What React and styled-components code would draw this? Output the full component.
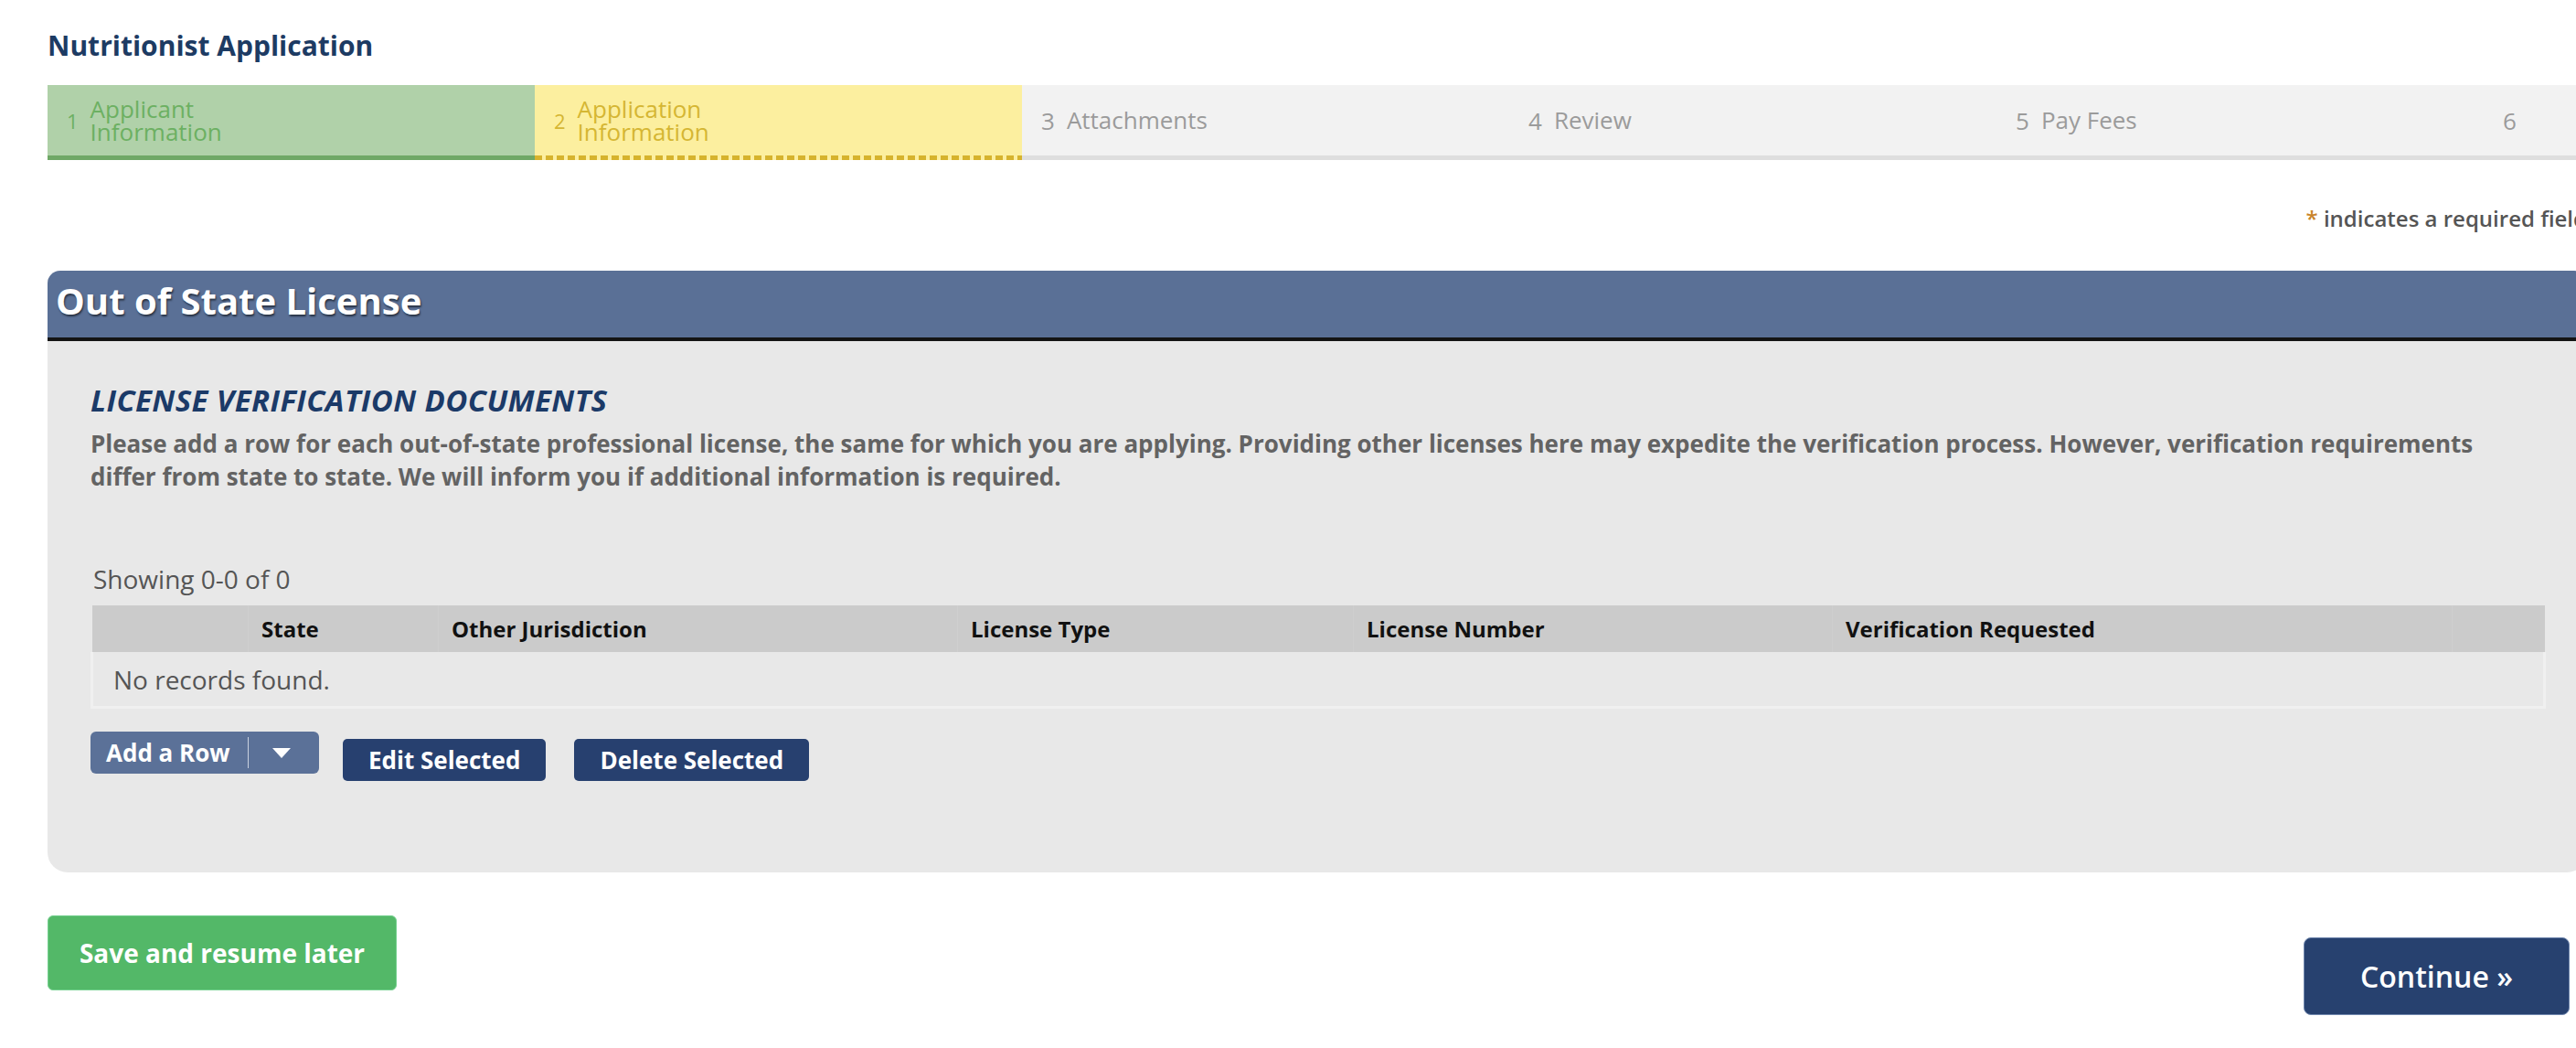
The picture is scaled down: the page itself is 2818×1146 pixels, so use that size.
import styled, { createGlobalStyle } from "styled-components";

const GlobalStyle = createGlobalStyle`
  html, body {
    margin: 0;
    padding: 0;
    background: #fff;
    overflow: hidden;
  }
  body {
    font-family: "Open Sans", Lato, sans-serif;
  }
`;

const Page = styled.div`
  width: 2778px;
  margin-left: 52px;
  padding-top: 32px;
`;

const Title = styled.h1`
  margin: 0;
  font-size: 30px;
  line-height: 36px;
  font-weight: 700;
  color: #1d3b63;
`;

const StepBar = styled.div`
  display: flex;
  margin-top: 25px;
  overflow: hidden;
`;

const stepTones = {
  done: { bg: "#b0d1a9", fg: "#6cb062", line: "#6fa866" },
  current: { bg: "#fcef9f", fg: "#d5b633", line: "#d6b32d" },
  todo: { bg: "#f2f2f2", fg: "#9b9b9b", line: "#dedede" },
};

const Step = styled.div`
  flex: 0 0 533px;
  height: 82px;
  box-sizing: border-box;
  display: flex;
  align-items: center;
  gap: 13px;
  padding: 0 21px 5px;
  font-size: 26px;
  color: ${(p) => stepTones[p.$tone].fg};
  background: ${(p) =>
    p.$tone === "current"
      ? `repeating-linear-gradient(90deg, ${stepTones.current.line} 0 8px, ${stepTones.current.bg} 8px 12px) left bottom / 100% 5px no-repeat, ${stepTones.current.bg}`
      : `linear-gradient(${stepTones[p.$tone].line}, ${stepTones[p.$tone].line}) left bottom / 100% 5px no-repeat, ${stepTones[p.$tone].bg}`};
`;

const StepNum = styled.span`
  font-size: ${(p) => (p.$small ? "22px" : "26px")};
`;

const StepLabel = styled.span`
  line-height: 25px;
`;

const Required = styled.div`
  margin-top: 49px;
  text-align: right;
  font-size: 24px;
  line-height: 30px;
  font-weight: 600;
  color: #555;
`;

const Star = styled.span`
  color: #c9842b;
`;

const Panel = styled.section`
  margin-top: 42px;
  background: #e8e8e8;
  border-radius: 14px 14px 22px 22px;
  overflow: hidden;
`;

const PanelHeader = styled.h2`
  margin: 0;
  height: 77px;
  box-sizing: border-box;
  padding: 10px 9px 0;
  background: #5a7096;
  border-bottom: 4px solid #141414;
  font-size: 40px;
  line-height: 46px;
  font-weight: 700;
  color: #fff;
  text-shadow: 1px 2px 2px rgba(0, 0, 0, 0.55);
`;

const PanelBody = styled.div`
  padding: 47px 48px 100px 47px;
`;

const SectionTitle = styled.h3`
  margin: 0;
  font-size: 33px;
  line-height: 36px;
  letter-spacing: 0.4px;
  font-weight: 700;
  font-style: italic;
  color: #1b3a68;
`;

const Description = styled.p`
  margin: 11px 0 0;
  font-size: 26px;
  line-height: 36px;
  font-weight: 700;
  color: #636363;
`;

const Showing = styled.div`
  margin-top: 79px;
  padding-left: 3px;
  font-size: 28px;
  line-height: 30px;
  color: #555;
`;

const Table = styled.table`
  margin-top: 14px;
  width: 100%;
  border-collapse: collapse;
  table-layout: fixed;
`;

const Th = styled.th`
  height: 51px;
  padding: 0 14px;
  background: #cbcbcb;
  border-left: 1px solid #cfcfcf;
  text-align: left;
  font-size: 24px;
  font-weight: 700;
  color: #111;
  &:first-child {
    border-left: none;
  }
`;

const EmptyCell = styled.td`
  height: 59px;
  padding: 0 0 0 22px;
  border: 3px solid #f0f0f0;
  border-top: none;
  font-size: 28px;
  color: #555;
`;

const Actions = styled.div`
  display: flex;
  align-items: flex-start;
  margin-top: 25px;
`;

const SplitButton = styled.button`
  display: flex;
  align-items: center;
  width: 250px;
  height: 46px;
  padding: 0 0 0 17px;
  border: none;
  border-radius: 6px;
  background: #5b7198;
  color: #fff;
  font-family: inherit;
  font-size: 26px;
  font-weight: 700;
`;

const SplitDivider = styled.span`
  width: 1px;
  height: 34px;
  margin-left: 19px;
  background: #c9d1df;
`;

const Caret = styled.span`
  display: flex;
  flex: 1;
  justify-content: center;
  padding-right: 4px;
`;

const NavyButton = styled.button`
  height: 46px;
  margin: 8px 0 0 ${(p) => p.$gap}px;
  padding: 0 28px;
  border: none;
  border-radius: 5px;
  background: #27406f;
  color: #fff;
  font-family: inherit;
  font-size: 26px;
  font-weight: 700;
`;

const Footer = styled.div`
  display: flex;
  justify-content: space-between;
  align-items: flex-start;
  margin-top: 47px;
  padding-right: 19px;
`;

const SaveButton = styled.button`
  width: 382px;
  height: 82px;
  border: 1px solid #74d08f;
  border-radius: 6px;
  background: #53b868;
  color: #fff;
  font-family: inherit;
  font-size: 28px;
  font-weight: 700;
`;

const ContinueButton = styled.button`
  width: 291px;
  height: 85px;
  margin-top: 24px;
  border: 1px solid #6f86ad;
  border-radius: 8px;
  background: #27416f;
  color: #fff;
  font-family: inherit;
  font-size: 32px;
  font-weight: 600;
`;

const steps = [
  { n: 1, label: ["Applicant", "Information"], tone: "done" },
  { n: 2, label: ["Application", "Information"], tone: "current" },
  { n: 3, label: ["Attachments"], tone: "todo" },
  { n: 4, label: ["Review"], tone: "todo" },
  { n: 5, label: ["Pay Fees"], tone: "todo" },
  { n: 6, label: [], tone: "todo" },
];

const columns = [
  { w: 171, label: "" },
  { w: 208, label: "State" },
  { w: 568, label: "Other Jurisdiction" },
  { w: 433, label: "License Type" },
  { w: 524, label: "License Number" },
  { w: 678, label: "Verification Requested" },
  { w: 101, label: "" },
];

export default function App() {
  return (
    <>
      <GlobalStyle />
      <Page>
        <Title>Nutritionist Application</Title>

        <StepBar>
          {steps.map((s) => (
            <Step key={s.n} $tone={s.tone}>
              <StepNum $small={s.label.length > 1}>{s.n}</StepNum>
              <StepLabel>
                {s.label.map((l, i) => (
                  <span key={l}>
                    {i > 0 && <br />}
                    {l}
                  </span>
                ))}
              </StepLabel>
            </Step>
          ))}
        </StepBar>

        <Required>
          <Star>*</Star> indicates a required field
        </Required>

        <Panel>
          <PanelHeader>Out of State License</PanelHeader>
          <PanelBody>
            <SectionTitle>LICENSE VERIFICATION DOCUMENTS</SectionTitle>
            <Description>
              Please add a row for each out-of-state professional license, the
              same for which you are applying. Providing other licenses here may
              expedite the verification process. However, verification
              requirements differ from state to state. We will inform you if
              additional information is required.
            </Description>

            <Showing>Showing 0-0 of 0</Showing>
            <Table>
              <colgroup>
                {columns.map((c, i) => (
                  <col key={i} style={{ width: c.w }} />
                ))}
              </colgroup>
              <thead>
                <tr>
                  {columns.map((c, i) => (
                    <Th key={i}>{c.label}</Th>
                  ))}
                </tr>
              </thead>
              <tbody>
                <tr>
                  <EmptyCell colSpan={columns.length}>No records found.</EmptyCell>
                </tr>
              </tbody>
            </Table>

            <Actions>
              <SplitButton>
                Add a Row
                <SplitDivider />
                <Caret>
                  <svg width="20" height="11" viewBox="0 0 20 11">
                    <polygon points="0,0 20,0 10,11" fill="#fff" />
                  </svg>
                </Caret>
              </SplitButton>
              <NavyButton $gap={26}>Edit Selected</NavyButton>
              <NavyButton $gap={31}>Delete Selected</NavyButton>
            </Actions>
          </PanelBody>
        </Panel>

        <Footer>
          <SaveButton>Save and resume later</SaveButton>
          <ContinueButton>Continue »</ContinueButton>
        </Footer>
      </Page>
    </>
  );
}
